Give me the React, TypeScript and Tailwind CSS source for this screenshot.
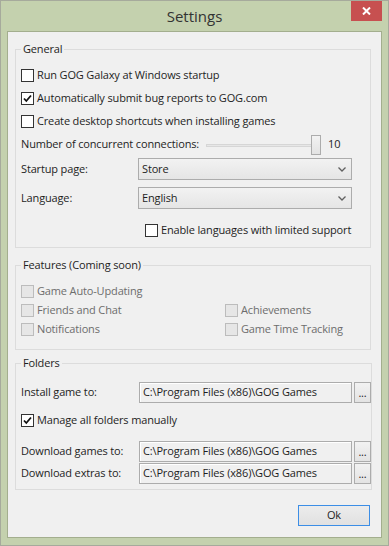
import React from "react";

const font = { fontFamily: '"Open Sans", "Noto Sans", sans-serif' };

function CheckBox({ checked, disabled }: { checked?: boolean; disabled?: boolean }) {
  return (
    <span
      className={
        "w-[13px] h-[13px] shrink-0 border flex items-center justify-center " +
        (disabled ? "border-[#bcbcbc] bg-[#e6e6e6]" : "border-[#333333] bg-white")
      }
    >
      {checked && (
        <svg width="9" height="9" viewBox="0 0 9 9">
          <path d="M1 4.5 L3.3 7 L8 1.5" stroke="#111" strokeWidth="1.8" fill="none" />
        </svg>
      )}
    </span>
  );
}

function CheckRow({
  label,
  checked,
  disabled,
  className = "",
}: {
  label: string;
  checked?: boolean;
  disabled?: boolean;
  className?: string;
}) {
  return (
    <div className={"flex items-center gap-[3px] " + className}>
      <CheckBox checked={checked} disabled={disabled} />
      <span className={disabled ? "text-[#6d6d6d]" : "text-[#1e1e1e]"}>{label}</span>
    </div>
  );
}

function Select({ value }: { value: string }) {
  return (
    <div className="w-[214px] h-[22px] border border-[#acacac] bg-gradient-to-b from-[#f2f2f2] to-[#e5e5e5] flex items-center justify-between pl-[3px] pr-[5px]">
      <span>{value}</span>
      <svg width="8" height="5" viewBox="0 0 8 5">
        <path d="M0.5 0.5 L4 4 L7.5 0.5" stroke="#606060" strokeWidth="1.3" fill="none" />
      </svg>
    </div>
  );
}

function PathRow({ label, className = "" }: { label: string; className?: string }) {
  return (
    <div className={"flex items-center h-[21px] " + className}>
      <span className="w-[123px] pl-[5px]">{label}</span>
      <div className="w-[213px] h-[21px] border border-[#acacac] bg-[#f0f0f0] shadow-[inset_1px_1px_0_#ffffff] flex items-center pl-[3px]">
        C:\Program Files (x86)\GOG Games
      </div>
      <button className="ml-[2px] w-[17px] h-[21px] border border-[#acacac] bg-gradient-to-b from-[#f2f2f2] to-[#e3e3e3] flex items-end justify-center pb-[4px] leading-none text-[#222]">
        ...
      </button>
    </div>
  );
}

function Group({
  title,
  className = "",
  children,
}: {
  title: string;
  className?: string;
  children: React.ReactNode;
}) {
  return (
    <fieldset className={"border border-[#dcdcdc] " + className}>
      <legend className="ml-[5px] px-[2px] leading-[16px] text-[#1e1e1e]">{title}</legend>
      {children}
    </fieldset>
  );
}

export default function App() {
  return (
    <div
      style={font}
      className="w-[389px] h-[546px] border border-[#a6aa9c] bg-[#c4d1ae] text-[11px] tracking-[-0.15px] text-[#1e1e1e] flex flex-col"
    >
      <div className="relative h-[30px] flex items-center justify-center">
        <span className="text-[15px] tracking-normal text-[#333333] pt-[1px]">Settings</span>
        <div className="absolute top-0 right-[6px] w-[31px] h-[20px] bg-[#c75050] flex items-center justify-center">
          <svg width="9" height="8" viewBox="0 0 9 8">
            <path d="M1 0.5 L8 7.5 M8 0.5 L1 7.5" stroke="#fff" strokeWidth="2" />
          </svg>
        </div>
      </div>

      <div className="mx-[6px] h-[507px] border border-[#a3ae8e] bg-[#f0f0f0] pl-[7px] pr-[10px]">
        <Group title="General" className="mt-[9px] pb-[5px]">
          <div className="pl-[5px] pt-[7px]">
            <CheckRow label="Run GOG Galaxy at Windows startup" className="h-[23px]" />
            <CheckRow label="Automatically submit bug reports to GOG.com" checked className="h-[23px]" />
            <CheckRow label="Create desktop shortcuts when installing games" className="h-[23px]" />
            <div className="flex items-center h-[23px]">
              <span className="w-[185px]">Number of concurrent connections:</span>
              <div className="relative w-[115px] h-[20px]">
                <div className="absolute left-0 right-0 top-[9px] h-[3px] border border-[#d6d6d6] bg-[#e7e7e7]" />
                <div className="absolute right-0 top-0 w-[10px] h-[20px] border border-[#acacac] bg-gradient-to-b from-[#f2f2f2] to-[#e3e3e3]" />
              </div>
              <span className="ml-[7px]">10</span>
            </div>
            <div className="flex items-center mt-[2px]">
              <span className="w-[117px]">Startup page:</span>
              <Select value="Store" />
            </div>
            <div className="flex items-center mt-[7px]">
              <span className="w-[117px]">Language:</span>
              <Select value="English" />
            </div>
            <CheckRow label="Enable languages with limited support" className="h-[23px] mt-[10px] ml-[124px]" />
          </div>
        </Group>

        <Group title="Features (Coming soon)" className="mt-[9px] pb-[10px]">
          <div className="pl-[5px] pt-[9px] grid grid-cols-[204px_1fr]">
            <CheckRow label="Game Auto-Updating" disabled className="h-[19px]" />
            <div />
            <CheckRow label="Friends and Chat" disabled className="h-[19px]" />
            <CheckRow label="Achievements" disabled className="h-[19px]" />
            <CheckRow label="Notifications" disabled className="h-[19px]" />
            <CheckRow label="Game Time Tracking" disabled className="h-[19px]" />
          </div>
        </Group>

        <Group title="Folders" className="mt-[5px] pb-[5px]">
          <PathRow label="Install game to:" className="mt-[11px]" />
          <CheckRow label="Manage all folders manually" checked className="h-[23px] mt-[6px] ml-[5px]" />
          <PathRow label="Download games to:" className="mt-[9px]" />
          <PathRow label="Download extras to:" className="mt-[1px]" />
        </Group>

        <div className="flex justify-end mt-[15px] mr-[1px]">
          <button className="w-[72px] h-[21px] border border-[#3c8ee6] bg-gradient-to-b from-[#ececec] to-[#e1e1e1] text-[#1e1e1e]">
            Ok
          </button>
        </div>
      </div>
    </div>
  );
}
